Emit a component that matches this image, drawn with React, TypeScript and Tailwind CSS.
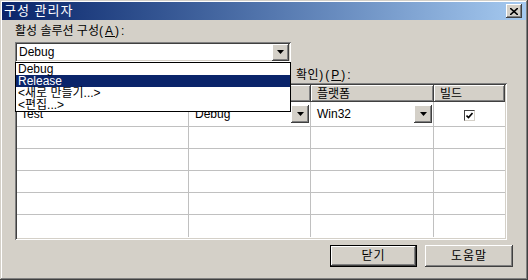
const raised =
  "bg-[#d4d0c8] shadow-[inset_-1px_-1px_#404040,inset_1px_1px_#ffffff,inset_-2px_-2px_#808080,inset_2px_2px_#d4d0c8]";
const sunken =
  "shadow-[inset_1px_1px_#808080,inset_-1px_-1px_#ffffff,inset_2px_2px_#404040,inset_-2px_-2px_#d4d0c8]";

function Arrow() {
  return (
    <svg width="7" height="4" viewBox="0 0 7 4">
      <path d="M0 0h7L3.5 4z" fill="#000" />
    </svg>
  );
}

function DropButton({ className = "" }: { className?: string }) {
  return (
    <div className={`${raised} flex h-[17px] w-[17px] items-center justify-center ${className}`}>
      <Arrow />
    </div>
  );
}

const rows = [0, 1, 2, 3, 4];

export default function App() {
  return (
    <div className="h-[280px] w-[528px] overflow-hidden bg-[#d4d0c8] font-['Liberation_Sans','Noto_Sans_CJK_KR',sans-serif] text-[12px] leading-[14px] text-black">
      <div className="relative h-full w-full p-[2px] shadow-[inset_-1px_-1px_#404040,inset_1px_1px_#d4d0c8,inset_-2px_-2px_#808080,inset_2px_2px_#ffffff]">
        {/* title bar */}
        <div className="flex h-[18px] items-center justify-between bg-gradient-to-r from-[#0a246a] to-[#a6caf0] pl-[2px] pr-[4px]">
          <span className="text-[13px] tracking-[1px] text-white">구성 관리자</span>
          <div className={`${raised} flex h-[14px] w-[16px] items-center justify-center`}>
            <svg width="8" height="7" viewBox="0 0 8 7">
              <path d="M0 0l8 7M8 0L0 7" stroke="#000" strokeWidth="1.6" />
            </svg>
          </div>
        </div>

        <div className="pl-[13px] pr-[19px]">
          <div className="mt-[4px] h-[14px]">
            활성 솔루션 구성<span className="tracking-[2px]">(<span className="underline">A</span>):</span>
          </div>

          {/* combo */}
          <div className={`mt-[4px] flex h-[20px] w-[276px] items-center bg-white pl-[4px] pr-[2px] ${sunken}`}>
            <span className="flex-1">Debug</span>
            <DropButton className="h-[16px] w-[16px]" />
          </div>

          <div className="mt-[6px] h-[14px] whitespace-nowrap tracking-[0.62px]">
            프로젝트 컨텍스트(빌드하거나 배포할 프로젝트 구성 확인<span className="tracking-[2px]">)(<span className="underline">P</span>):</span>
          </div>

          {/* grid */}
          <div className={`mt-[1px] h-[157px] w-[492px] bg-white p-[2px] ${sunken}`}>
            <div className="grid grid-cols-[172px_122px_123px_71px]">
              {["프로젝트", "구성", "플랫폼", "빌드"].map((h) => (
                <div key={h} className={`${raised} h-[17px] pl-[6px] pt-[2px]`}>
                  {h}
                </div>
              ))}
            </div>

            <div className="grid h-[25px] grid-cols-[172px_122px_123px_71px] border-b border-[#c0c0c0]">
              <div className="flex items-center border-r border-[#c0c0c0] pl-[4px]">Test</div>
              <div className="flex items-center justify-between border-r border-[#c0c0c0] pl-[6px] pr-[1px]">
                <span>Debug</span>
                <DropButton className="h-[18px] w-[18px]" />
              </div>
              <div className="flex items-center justify-between border-r border-[#c0c0c0] pl-[6px] pr-[1px]">
                <span>Win32</span>
                <DropButton className="h-[18px] w-[18px]" />
              </div>
              <div className="flex items-center justify-center pt-[3px]">
                <div className="flex h-[11px] w-[11px] items-center justify-center border border-t-[#404040] border-l-[#404040] border-r-[#d4d0c8] border-b-[#d4d0c8] bg-white">
                  <svg width="7" height="7" viewBox="0 0 7 7">
                    <path d="M0.5 3.5l2 2L6.5 1" stroke="#000" strokeWidth="1.6" fill="none" />
                  </svg>
                </div>
              </div>
            </div>

            {rows.map((r) => (
              <div
                key={r}
                className={`grid h-[22px] grid-cols-[172px_122px_123px_71px] ${r < 4 ? "border-b border-[#c0c0c0]" : ""}`}
              >
                <div className="border-r border-[#c0c0c0]" />
                <div className="border-r border-[#c0c0c0]" />
                <div className="border-r border-[#c0c0c0]" />
                <div />
              </div>
            ))}
          </div>

          {/* buttons */}
          <div className="mt-[5px] flex justify-end gap-[8px]">
            <button className="flex h-[22px] w-[87px] items-center justify-center border border-black bg-[#d4d0c8] tracking-[1px] shadow-[inset_-1px_-1px_#404040,inset_1px_1px_#ffffff,inset_-2px_-2px_#808080]">
              닫기
            </button>
            <button className={`${raised} mr-[-6px] flex h-[22px] w-[88px] items-center justify-center tracking-[1px]`}>
              도움말
            </button>
          </div>
        </div>

        {/* open dropdown list */}
        <div className="absolute left-[15px] top-[62px] h-[50px] w-[276px] border border-black bg-white">
          <div className="h-[12px] pl-[2px] leading-[12px]">Debug</div>
          <div className="h-[12px] bg-[#0a246a] pl-[2px] leading-[12px] text-white">Release</div>
          <div className="h-[12px] pl-[2px] leading-[12px]">&lt;새로 만들기...&gt;</div>
          <div className="h-[12px] pl-[2px] leading-[12px]">&lt;편집...&gt;</div>
        </div>
      </div>
    </div>
  );
}
